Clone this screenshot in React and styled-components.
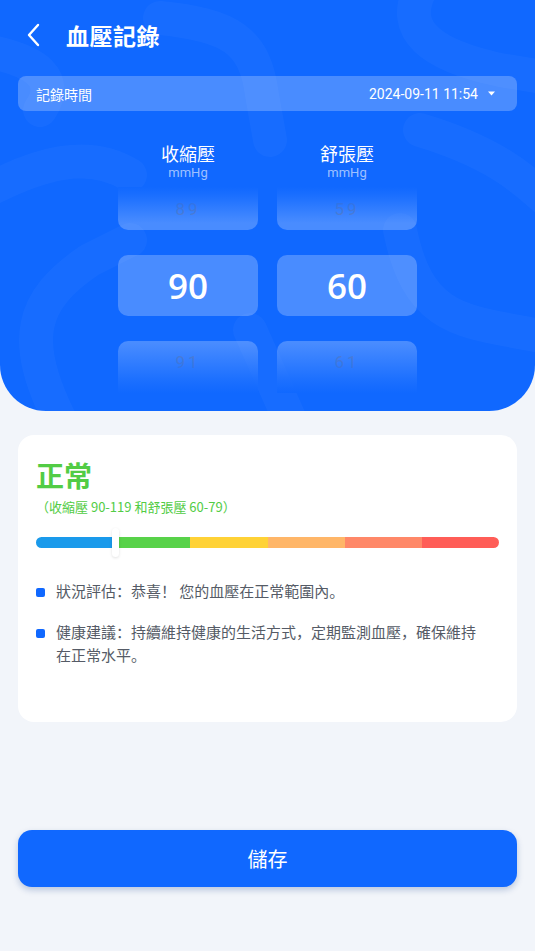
import React from "react";
import styled, { createGlobalStyle } from "styled-components";

const Global = createGlobalStyle`
  html, body { margin: 0; padding: 0; background: #f2f5fa; }
  body { font-family: Roboto, "Noto Sans CJK TC", sans-serif; }
  * { box-sizing: border-box; }
`;

const Page = styled.div`
  width: 535px;
  min-height: 951px;
  background: #f2f5fa;
  display: flex;
  flex-direction: column;
`;

const Header = styled.header`
  position: relative;
  overflow: hidden;
  height: 411px;
  background: #1068ff;
  border-radius: 0 0 46px 46px;
`;

const Deco = styled.svg`
  position: absolute;
  inset: 0;
  pointer-events: none;
`;

const HeaderContent = styled.div`
  position: relative;
  display: flex;
  flex-direction: column;
`;

const NavBar = styled.div`
  height: 70px;
  display: flex;
  align-items: center;
  padding-left: 26px;
  gap: 24px;
`;

const Title = styled.h1`
  margin: 0;
  font-family: "Noto Sans CJK TC", sans-serif;
  font-size: 23px;
  font-weight: 700;
  color: #fff;
  letter-spacing: 0.5px;
`;

const DateRow = styled.div`
  margin: 6px 18px 0;
  height: 35px;
  border-radius: 8px;
  background: rgba(255, 255, 255, 0.24);
  display: flex;
  align-items: center;
  justify-content: space-between;
  padding: 0 22px 0 18px;
  color: #fff;
`;

const DateLabel = styled.span`
  font-family: "Noto Sans CJK TC", sans-serif;
  font-size: 14px;
`;

const DateValue = styled.span`
  display: flex;
  align-items: center;
  gap: 10px;
  font-family: Roboto, sans-serif;
  font-size: 14px;
`;

const Columns = styled.div`
  display: flex;
  justify-content: center;
  gap: 19px;
  margin-top: 30px;
`;

const Column = styled.div`
  width: 140px;
  display: flex;
  flex-direction: column;
  align-items: center;
`;

const ColLabel = styled.div`
  font-family: "Noto Sans CJK TC", sans-serif;
  font-size: 18px;
  line-height: 24px;
  color: #fff;
`;

const Unit = styled.div`
  font-family: Roboto, sans-serif;
  font-size: 13px;
  line-height: 16px;
  color: rgba(255, 255, 255, 0.6);
`;

const Picker = styled.div`
  position: relative;
  width: 140px;
  height: 206px;
  margin-top: 6px;
  overflow: hidden;
`;

const Track = styled.div`
  display: flex;
  flex-direction: column;
  gap: 25px;
  margin-top: -18px;
`;

const Item = styled.div`
  height: 61px;
  border-radius: 10px;
  background: rgba(255, 255, 255, 0.24);
  display: flex;
  align-items: ${(p) => (p.$pos === "top" ? "flex-end" : p.$pos === "bottom" ? "flex-start" : "center")};
  padding: ${(p) => (p.$pos === "top" ? "0 0 10px" : p.$pos === "bottom" ? "10px 0 0" : "0")};
  justify-content: center;
  font-family: ${(p) => (p.$pos ? "Roboto, sans-serif" : '"Open Sans", sans-serif')};
  font-size: ${(p) => (p.$pos ? "17px" : "35px")};
  line-height: ${(p) => (p.$pos ? "22px" : "normal")};
  font-weight: ${(p) => (p.$pos ? 400 : 600)};
  letter-spacing: ${(p) => (p.$pos ? "3px" : "0")};
  color: ${(p) => (p.$pos ? "#5f82c4" : "#fff")};
`;

const Fade = styled.div`
  position: absolute;
  left: 0;
  right: 0;
  height: ${(p) => p.$h}px;
  ${(p) => (p.$top ? "top: 0;" : "bottom: 0;")}
  background: linear-gradient(
    ${(p) => (p.$top ? "to bottom" : "to top")},
    #1068ff 0%,
    rgba(16, 104, 255, 0.8) 25%,
    rgba(16, 104, 255, 0) 100%
  );
`;

const Body = styled.main`
  display: flex;
  flex-direction: column;
  padding: 24px 18px 0;
  flex: 1;
`;

const Card = styled.section`
  background: #fff;
  border-radius: 16px;
  height: 287px;
  padding: 20px 18px 0 18px;
  display: flex;
  flex-direction: column;
`;

const Status = styled.div`
  font-family: "Noto Sans CJK TC", sans-serif;
  font-size: 28px;
  font-weight: 700;
  line-height: 40px;
  color: #52cc45;
`;

const Range = styled.div`
  font-family: "Noto Sans CJK TC", sans-serif;
  font-size: 13px;
  line-height: 18px;
  color: #52cc45;
  margin-top: 3px;
`;

const BarWrap = styled.div`
  position: relative;
  margin-top: 21px;
  height: 11px;
  width: 463px;
`;

const Bar = styled.div`
  display: flex;
  height: 11px;
  border-radius: 6px;
  overflow: hidden;
`;

const Seg = styled.div`
  flex: 1;
  background: ${(p) => p.$c};
`;

const Marker = styled.div`
  position: absolute;
  left: 76px;
  top: -9px;
  width: 7px;
  height: 29px;
  border-radius: 4px;
  background: #fff;
  box-shadow: 0 1px 3px rgba(0, 0, 0, 0.12);
`;

const Notes = styled.ul`
  list-style: none;
  margin: 31px 0 0;
  padding: 0;
  display: flex;
  flex-direction: column;
  gap: 18px;
`;

const Note = styled.li`
  display: flex;
  gap: 11px;
  font-family: "Noto Sans CJK SC", "Noto Sans CJK TC", sans-serif;
  font-size: 15px;
  line-height: 23px;
  color: #555b66;
  padding-right: 18px;
`;

const Dot = styled.span`
  flex: none;
  width: 9px;
  height: 9px;
  border-radius: 2px;
  background: #1068ff;
  margin-top: 9px;
`;

const Footer = styled.div`
  margin-top: auto;
  padding: 0 0 64px;
`;

const SaveButton = styled.button`
  width: 100%;
  height: 57px;
  border: none;
  border-radius: 14px;
  background: #1068ff;
  color: #fff;
  font-family: "Noto Sans CJK TC", sans-serif;
  font-size: 20px;
  box-shadow: 0 3px 6px rgba(16, 60, 140, 0.25);
  cursor: pointer;
`;

const colors = ["#1a9aeb", "#58d249", "#ffd236", "#ffb668", "#ff8868", "#ff5d57"];

function PickerColumn({ label, values }) {
  return (
    <Column>
      <ColLabel>{label}</ColLabel>
      <Unit>mmHg</Unit>
      <Picker>
        <Track>
          <Item $pos="top">{values[0]}</Item>
          <Item>{values[1]}</Item>
          <Item $pos="bottom">{values[2]}</Item>
        </Track>
        <Fade $top $h={36} />
        <Fade $h={50} />
      </Picker>
    </Column>
  );
}

export default function App() {
  return (
    <Page>
      <Global />
      <Header>
        <Deco width="535" height="411" viewBox="0 0 535 411">
          <g fill="none" stroke="rgba(255,255,255,0.03)" strokeWidth="34" strokeLinecap="round">
            <path d="M160 18 C230 25 255 40 262 95 L270 140" />
            <path d="M420 -10 C400 30 430 55 500 70 L560 80" />
            <path d="M-20 50 C40 60 60 80 40 110" />
            <path d="M-30 200 C40 160 90 150 130 175" />
            <path d="M60 420 C20 340 30 300 90 260 L130 240" />
            <path d="M250 330 L290 420" />
            <path d="M420 130 C520 160 540 200 560 210" />
            <path d="M400 230 C420 330 470 320 560 340" />
          </g>
        </Deco>
        <HeaderContent>
          <NavBar>
            <svg width="16" height="24" viewBox="0 0 16 24">
              <path d="M12 2 L3 12 L12 22" fill="none" stroke="#fff" strokeWidth="2.4" strokeLinecap="round" strokeLinejoin="round" />
            </svg>
            <Title>血壓記錄</Title>
          </NavBar>
          <DateRow>
            <DateLabel>記錄時間</DateLabel>
            <DateValue>
              2024-09-11 11:54
              <svg width="7" height="5" viewBox="0 0 7 5">
                <path d="M0 0.5 L7 0.5 L3.5 4.5 Z" fill="#fff" />
              </svg>
            </DateValue>
          </DateRow>
          <Columns>
            <PickerColumn label="收縮壓" values={["89", "90", "91"]} />
            <PickerColumn label="舒張壓" values={["59", "60", "61"]} />
          </Columns>
        </HeaderContent>
      </Header>
      <Body>
        <Card>
          <Status>正常</Status>
          <Range>（收縮壓 90-119 和舒張壓 60-79）</Range>
          <BarWrap>
            <Bar>
              {colors.map((c) => (
                <Seg key={c} $c={c} />
              ))}
            </Bar>
            <Marker />
          </BarWrap>
          <Notes>
            <Note>
              <Dot />
              <span>狀況評估：恭喜！ 您的血壓在正常範圍內。</span>
            </Note>
            <Note>
              <Dot />
              <span>健康建議：持續維持健康的生活方式，定期監測血壓，確保維持在正常水平。</span>
            </Note>
          </Notes>
        </Card>
        <Footer>
          <SaveButton>儲存</SaveButton>
        </Footer>
      </Body>
    </Page>
  );
}
